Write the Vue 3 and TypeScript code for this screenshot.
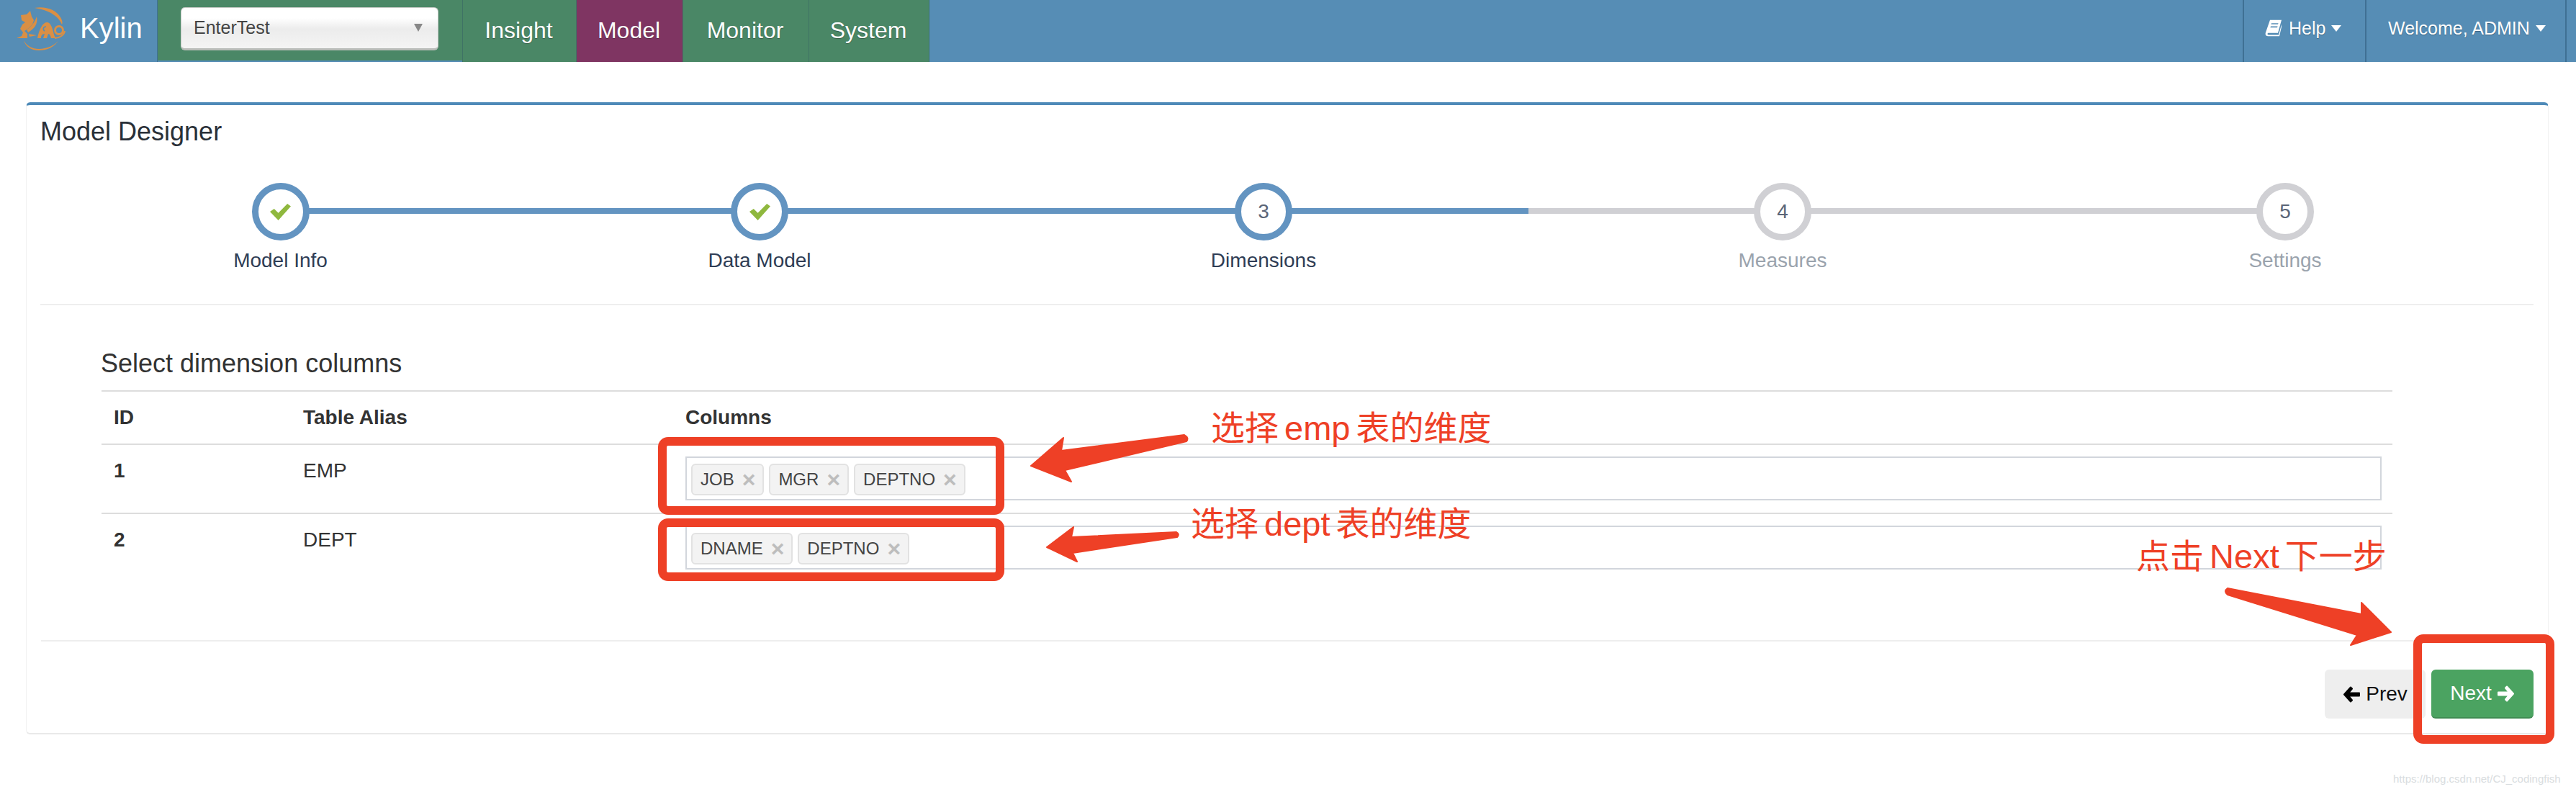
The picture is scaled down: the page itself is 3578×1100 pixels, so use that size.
<script setup lang="ts">
interface Step { label: string; num: number; state: 'done' | 'active' | 'todo' }
const steps: Step[] = [
  { label: 'Model Info', num: 1, state: 'done' },
  { label: 'Data Model', num: 2, state: 'done' },
  { label: 'Dimensions', num: 3, state: 'active' },
  { label: 'Measures', num: 4, state: 'todo' },
  { label: 'Settings', num: 5, state: 'todo' },
]
const rows = [
  { id: 1, alias: 'EMP', cols: ['JOB', 'MGR', 'DEPTNO'] },
  { id: 2, alias: 'DEPT', cols: ['DNAME', 'DEPTNO'] },
]
const menu = ['Insight', 'Model', 'Monitor', 'System']
</script>

<template>
  <div class="page">
    <header class="nav">
      <div class="brand">
        <svg class="logo" viewBox="0 0 110 86" width="110" height="86">
          <g fill="#d98f45">
            <path d="M38 11 C52 8 68 13 74 24 C77 29 77 32 76 34 C72 24 60 14 38 11 Z" />
            <path d="M23 56 C28 66 40 70 52 67 C61 65 68 61 72 55 C66 66 54 70 44 70 C33 70 25 64 23 56 Z" />
            <path d="M19 21 L27 20 L32 15 L34 23 L37 28 L35 34 L30 39 L24 43 L28 47 L28 53 L13 53 L20 50 L22 45 L18 40 L21 34 L25 31 L20 28 Z" />
            <path d="M41 23 C43 33 38 40 29 45 L27 41 C34 37 38 31 41 23 Z" />
            <path d="M30 47 L41 49 L31 51 Z" />
            <path d="M42 53 C44 42 49 31 55 31 C60 31 62 37 64 44 C65 49 66 51 68 53 L61 53 C60 49 59 47 57 47 L55 53 L50 53 L52 47 C48 47 47 50 47 53 Z" />
          </g>
          <g fill="none" stroke="#d98f45">
            <circle cx="72" cy="42" r="5.5" stroke-width="3" />
            <path d="M66 53 C72 53 79 49 80 43" stroke-width="2" />
            <path d="M52 43 C49 41 50 37 54 37" stroke="#568db5" stroke-width="1.6" />
          </g>
        </svg>
        <span class="brand-name">Kylin</span>
      </div>
      <div class="project">
        <div class="select">
          <span>EnterTest</span>
          <i class="select-caret"></i>
        </div>
      </div>
      <ul class="menu">
        <li v-for="m in menu" :key="m" :class="{ on: m === 'Model' }">{{ m }}</li>
      </ul>
      <div class="right">
        <div class="right-item help">
          <svg class="book" viewBox="0 0 24 28" width="24" height="24" preserveAspectRatio="none">
            <path fill="#fff" d="M7 1 H23 L18 22 H5 C3 22 3 25 5 25 H19 L23 8 V12 L20 27 H4 C1 27 0 24 1 21 Z M9 6 L8.4 8 H18 L18.6 6 Z M8 11 L7.4 13 H17 L17.6 11 Z" />
          </svg>
          <span>Help</span><i class="caret"></i>
        </div>
        <div class="right-item welcome">
          <span>Welcome, ADMIN</span><i class="caret"></i>
        </div>
      </div>
    </header>

    <main class="panel">
      <h2 class="title">Model Designer</h2>

      <div class="stepper">
        <div class="track track-blue"></div>
        <div class="track track-grey"></div>
        <div v-for="s in steps" :key="s.num" class="step" :class="s.state">
          <div class="bubble">
            <svg v-if="s.state === 'done'" viewBox="0 0 30 40" width="29" height="23" preserveAspectRatio="none">
              <path fill="#8fb83e" d="M0 19 L6 12 L12 22 L25 0 L30 6 L12 40 Z" />
            </svg>
            <span v-else>{{ s.num }}</span>
          </div>
          <div class="label">{{ s.label }}</div>
        </div>
      </div>

      <section class="body">
        <h3 class="sub">Select dimension columns</h3>
        <table class="tbl">
          <colgroup>
            <col class="c1" /><col class="c2" /><col />
          </colgroup>
          <thead>
            <tr><th>ID</th><th>Table Alias</th><th>Columns</th></tr>
          </thead>
          <tbody>
            <tr v-for="r in rows" :key="r.id">
              <td class="num">{{ r.id }}</td>
              <td>{{ r.alias }}</td>
              <td class="cell">
                <div class="tagbox">
                  <span v-for="c in r.cols" :key="c" class="tag">{{ c }}<b class="x">×</b></span>
                </div>
              </td>
            </tr>
          </tbody>
        </table>
      </section>

      <footer class="foot">
        <button class="btn prev" type="button">
          <svg viewBox="0 0 24 24" width="24" height="25"><path fill="#000" stroke="#000" stroke-width="2" stroke-linejoin="round" d="M11 2 L2 12 L11 22 L13 20 L8 14 H23 V10 H8 L13 4 Z" /></svg>
          Prev
        </button>
        <button class="btn next" type="button">
          Next
          <svg viewBox="0 0 24 24" width="24" height="25"><path fill="#fff" stroke="#fff" stroke-width="2" stroke-linejoin="round" d="M13 2 L22 12 L13 22 L11 20 L16 14 H1 V10 H16 L11 4 Z" /></svg>
        </button>
      </footer>
    </main>

    <svg class="marks" width="3578" height="1100" viewBox="0 0 3578 1100">
      <g fill="none" stroke="#ee4026" stroke-width="12">
        <rect x="920" y="613" width="469" height="96" rx="8" />
        <rect x="920" y="726" width="469" height="75" rx="8" />
        <rect x="3358" y="887" width="184" height="140" rx="8" />
      </g>
      <g fill="#ee4026" stroke="#ee4026" stroke-width="2" stroke-linejoin="round">
        <path d="M1645 604 L1474 626 L1477 608 L1432 647 L1488 669 L1479 653 L1648 613 Q1652 608 1645 604 Z" />
        <path d="M1634 739 L1488 746 L1491 732 L1454 760 L1496 780 L1490 768 L1635 746 Q1639 742 1634 739 Z" />
        <path d="M3094 817 L3280 853 L3280 837 L3321 878 L3265 896 L3274 882 L3094 826 Q3088 821 3094 817 Z" />
      </g>
    </svg>
    <div class="note n1">选择 emp 表的维度</div>
    <div class="note n2">选择 dept 表的维度</div>
    <div class="note n3">点击 Next 下一步</div>
    <div class="watermark">https://blog.csdn.net/CJ_codingfish</div>
  </div>
</template>

<style>
html, body { margin: 0; background: #fff; }
</style>

<style scoped>
.page {
  position: relative;
  width: 3578px;
  height: 1100px;
  overflow: hidden;
  background: #fff;
  font-family: "Liberation Sans", Arial, sans-serif;
  color: #333;
}
.nav {
  display: flex;
  height: 86px;
  background: #568db5;
  color: #fff;
}
.brand {
  box-sizing: border-box;
  width: 219px;
  display: flex;
  align-items: center;
  border-right: 1px solid #3f7094;
  padding-left: 10px;
}
.logo { flex: none; margin-right: -19px; }
.brand-name { font-size: 40px; margin-left: 10px; position: relative; top: -4px; }
.project {
  box-sizing: border-box;
  width: 423px;
  height: 84px;
  background: #4a8766;
  padding: 10px 0 0 32px;
}
.select {
  box-sizing: border-box;
  width: 358px;
  height: 60px;
  border: 1px solid #c4c8c4;
  border-bottom: 3px solid #b9bdb9;
  border-radius: 6px;
  background: linear-gradient(#fff 0%, #fff 25%, #ececec 52%, #f4f4f4 100%);
  display: flex;
  align-items: center;
  justify-content: space-between;
  padding: 0 21px 2px 17px;
  color: #444;
  font-size: 25px;
}
.select-caret {
  width: 0; height: 0;
  border-left: 6px solid transparent;
  border-right: 6px solid transparent;
  border-top: 11px solid #888;
}
.menu {
  display: flex;
  list-style: none;
  margin: 0;
  padding: 0;
}
.menu li {
  height: 86px;
  box-sizing: border-box;
  background: #4a8766;
  border-left: 1px solid #3f7365;
  font-size: 32px;
  line-height: 84px;
  padding-right: 2px;
  text-align: center;
  text-shadow: 0 1px 1px rgba(0, 0, 0, .35);
}
.menu li:nth-child(1) { width: 158px; }
.menu li:nth-child(2) { width: 148px; background: #7f3562; }
.menu li:nth-child(3) { width: 175px; }
.menu li:nth-child(4) { width: 168px; border-right: 1px solid #3f7365; }
.right { margin-left: auto; display: flex; margin-right: 13px; }
.right-item {
  box-sizing: border-box;
  height: 86px;
  display: flex;
  align-items: center;
  border-left: 2px solid #3f7094;
  font-size: 25px;
  padding-bottom: 8px;
  text-shadow: 0 1px 1px rgba(0, 0, 0, .3);
}
.help { width: 170px; padding-left: 29px; }
.book { margin-right: 9px; }
.welcome { width: 280px; padding-left: 30px; border-right: 2px solid #3f7094; }
.caret {
  width: 0; height: 0;
  margin-left: 8px;
  border-left: 7px solid transparent;
  border-right: 7px solid transparent;
  border-top: 9px solid #fff;
}
.panel {
  box-sizing: border-box;
  position: absolute;
  left: 36px;
  top: 142px;
  width: 3504px;
  height: 878px;
  border: 1px solid #f1f1f1;
  border-top: 4px solid #4e8ab8;
  border-bottom: 2px solid #e9e9e9;
  border-radius: 6px;
  padding: 0 20px 0 19px;
}
.title {
  margin: 0;
  font-weight: 400;
  font-size: 36px;
  line-height: 74px;
  color: #2a3038;
}
.stepper {
  position: relative;
  display: grid;
  grid-template-columns: 667px 664px 736px 706px 690px;
  margin-top: 34px;
  height: 168px;
  border-bottom: 2px solid #eee;
}
.track { position: absolute; top: 35px; height: 8px; }
.track-blue { left: 334px; width: 1733px; background: #6394c1; }
.track-grey { left: 2067px; width: 1050px; background: #d0d0d4; }
.step {
  position: relative;
  display: flex;
  flex-direction: column;
  align-items: center;
}
.bubble {
  box-sizing: border-box;
  width: 80px;
  height: 80px;
  border-radius: 50%;
  border: 9px solid #6394c1;
  background: #fff;
  display: flex;
  align-items: center;
  justify-content: center;
  font-size: 28px;
  color: #5a6577;
}
.todo .bubble { border-color: #d0d0d4; }
.label {
  margin-top: 10px;
  font-size: 28px;
  line-height: 36px;
  color: #2f3d55;
}
.todo .label { color: #9aa3ad; }
.body { padding: 60px 0 0 85px; }
.sub {
  margin: 0 0 0 -1px;
  font-weight: 400;
  font-size: 36px;
  line-height: 42px;
  height: 44px;
  color: #333;
}
.tbl {
  table-layout: fixed;
  border-collapse: collapse;
  width: 3182px;
  margin-top: 14px;
  font-size: 28px;
  color: #333;
}
.c1 { width: 263px; }
.c2 { width: 531px; }
.tbl th {
  height: 74px;
  box-sizing: border-box;
  padding: 0 17px;
  text-align: left;
  font-weight: 700;
  border-top: 2px solid #ddd;
  border-bottom: 2px solid #ddd;
}
.tbl td {
  height: 96px;
  box-sizing: border-box;
  padding: 14px 17px 0;
  vertical-align: top;
  line-height: 44px;
  border-top: 2px solid #ddd;
}
.tbl tbody tr:first-child td { border-top: 0; }
.tbl td.num { font-weight: 700; }
.tbl td.cell { padding: 16px 15px 0 17px; }
.tagbox {
  box-sizing: border-box;
  height: 61px;
  border: 2px solid #d2d6dc;
  padding: 8px 6px 0;
  display: flex;
  gap: 7px;
  background: #fff;
}
.tag {
  box-sizing: border-box;
  height: 44px;
  display: inline-flex;
  align-items: center;
  padding: 0 10px 0 11px;
  border: 2px solid #e2e2e2;
  border-radius: 6px;
  background: #f3f3f3;
  font-size: 24px;
  line-height: 40px;
  color: #444;
}
.x {
  margin-left: 11px;
  font-size: 32px;
  line-height: 40px;
  font-weight: 700;
  color: #bdbdbd;
}
.foot {
  position: absolute;
  left: 20px;
  right: 20px;
  top: 743px;
  height: 127px;
  border-top: 2px solid #eee;
  display: flex;
  justify-content: flex-end;
  align-items: flex-start;
  gap: 8px;
  padding-top: 39px;
  box-sizing: border-box;
}
.btn {
  box-sizing: border-box;
  height: 68px;
  width: 140px;
  border: 0;
  border-radius: 6px;
  font-family: inherit;
  font-size: 28px;
  display: flex;
  align-items: center;
  justify-content: center;
  gap: 8px;
  padding: 0;
}
.prev { background: #eee; color: #111; }
.next { width: 142px; background: #4ba361; color: #fff; border-bottom: 2px solid #3f8b52; }
.marks { position: absolute; left: 0; top: 0; pointer-events: none; }
.note {
  position: absolute;
  color: #ee4026;
  font-size: 47px;
  line-height: 56px;
  word-spacing: -5px;
  white-space: nowrap;
  font-family: "Liberation Sans", "Noto Sans CJK SC", sans-serif;
}
.n1 { left: 1682px; top: 567px; }
.n2 { left: 1654px; top: 700px; }
.n3 { left: 2967px; top: 745px; }
.watermark {
  position: absolute;
  left: 3324px;
  top: 1070px;
  font-size: 15px;
  line-height: 24px;
  color: #d9dde0;
  white-space: nowrap;
}
</style>
